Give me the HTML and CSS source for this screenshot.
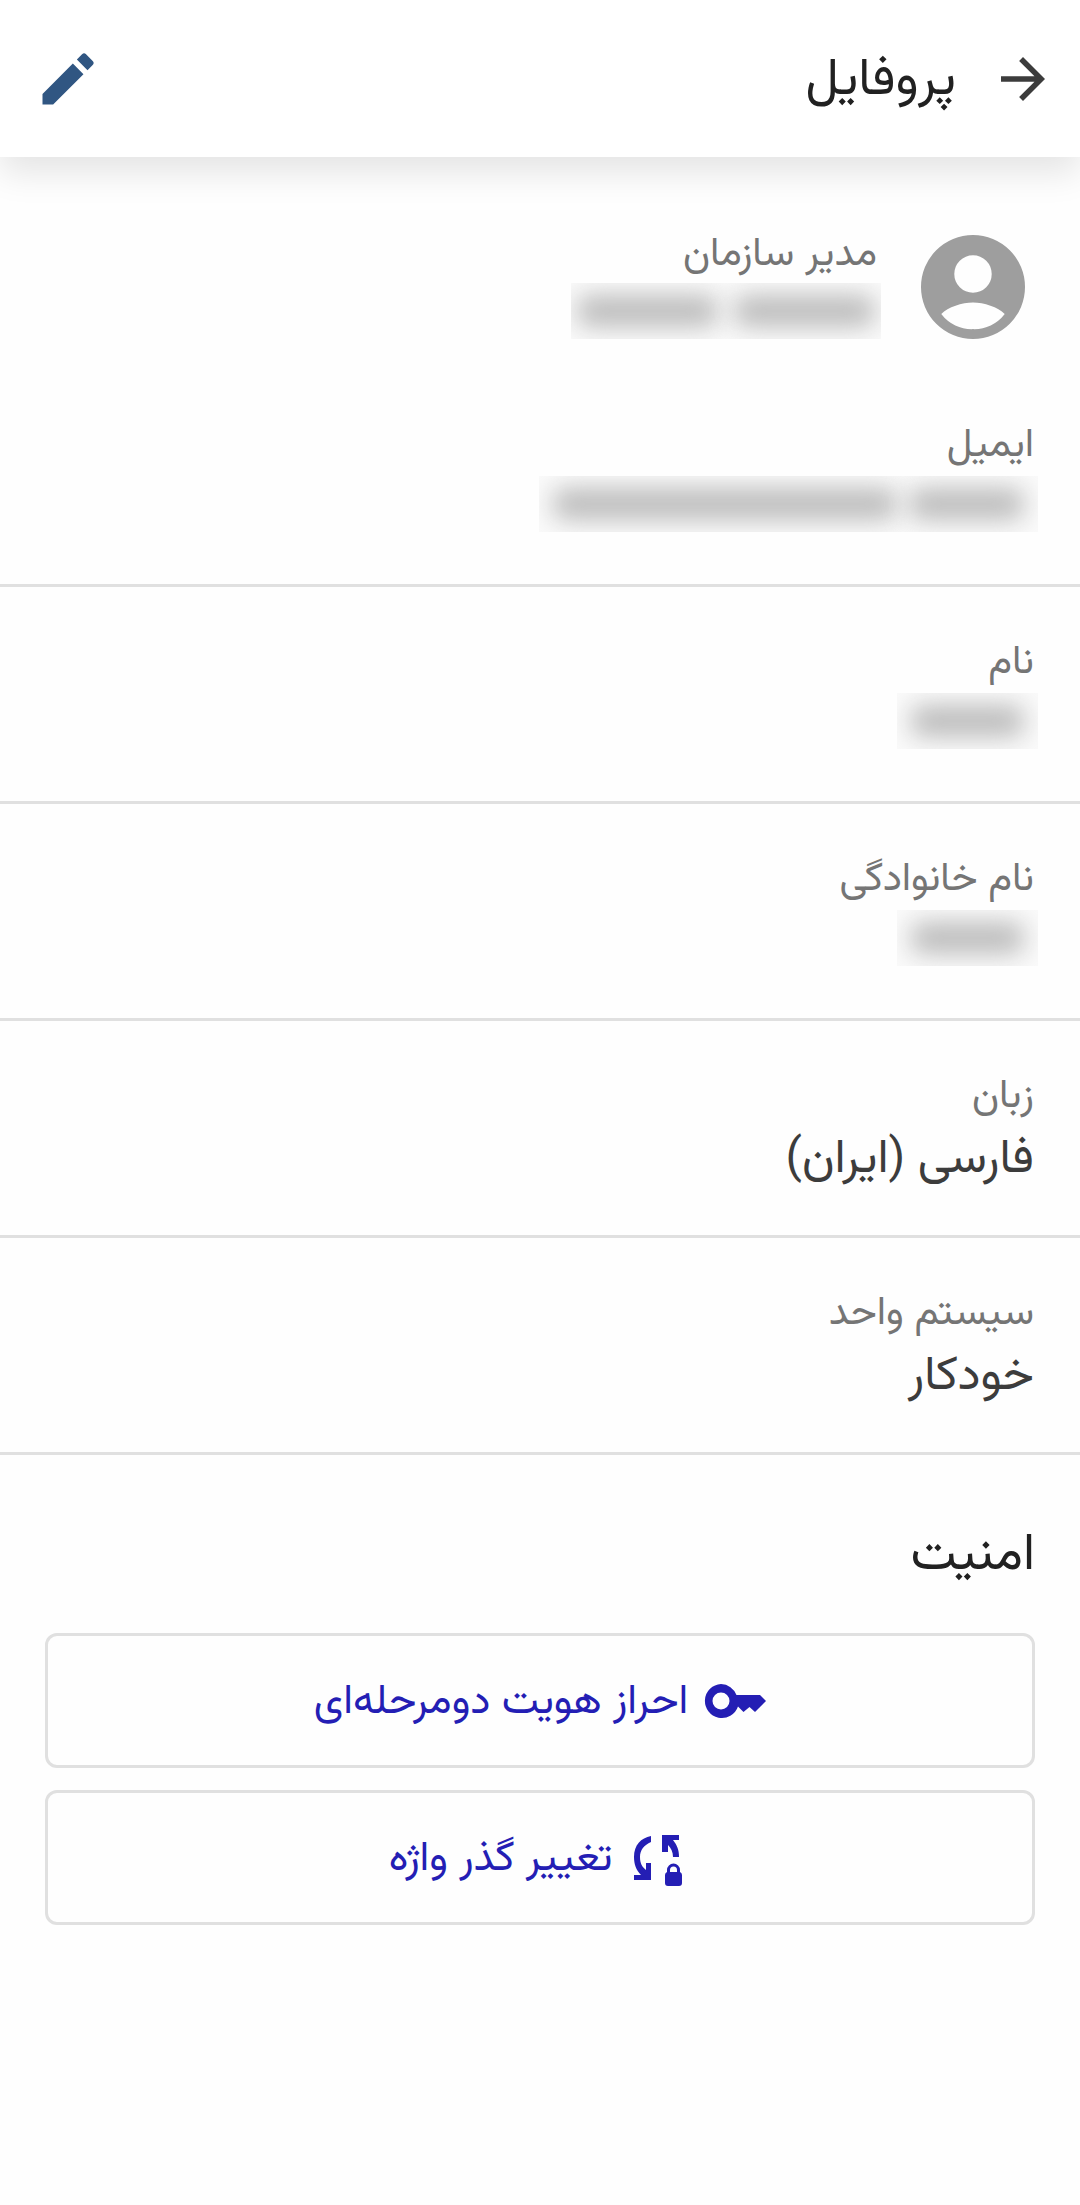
FILE: index.html
```html
<!DOCTYPE html>
<html lang="fa" dir="rtl">
<head>
<meta charset="utf-8">
<meta name="viewport" content="width=device-width, initial-scale=1">
<title>پروفایل</title>
<link rel="stylesheet" href="styles.css">
</head>
<body>
<header class="app-bar">
  <button class="icon-button" type="button" aria-label="بازگشت">
    <svg class="icon-back" viewBox="0 0 24 24"><path d="M12 4l-1.41 1.41L16.17 11H4v2h12.17l-5.58 5.59L12 20l8-8z"/></svg>
  </button>
  <h1 class="title">پروفایل</h1>
  <button class="icon-button edit" type="button" aria-label="ویرایش">
    <svg class="icon-edit" viewBox="0 0 24 24"><path d="M3 17.25V21h3.75L17.460 10.290l-3.75-3.75L3 17.25zM20.71 7.04a1 1 0 0 0 0-1.41l-2.34-2.34a1 1 0 0 0-1.41 0l-1.830 1.830 3.75 3.75 1.830-1.830z"/></svg>
  </button>
</header>
<main>
  <section class="summary">
    <svg class="avatar" viewBox="2 2 20 20"><path fill-rule="evenodd" d="M12 2a10 10 0 1 0 0 20 10 10 0 0 0 0-20zm0 3.9a3.6 3.6 0 1 1 0 7.2 3.6 3.6 0 0 1 0-7.2zM5.9 17.2c1.3-1.3 4-2.2 6.1-2.2s4.800.9 6.100 2.2A7.300 7.300 0 0 1 12 20.100a7.300 7.300 0 0 1-6.100-2.900z"/></svg>
    <div class="summary-text">
      <span class="label">مدیر سازمان</span>
      <span class="redacted full-name"><i class="given"></i><i class="family"></i></span>
    </div>
  </section>
  <dl class="fields">
    <div class="field"><dt class="label">ایمیل</dt><dd class="value"><span class="redacted email"><i class="user"></i><i class="domain"></i></span></dd></div>
    <div class="field"><dt class="label">نام</dt><dd class="value"><span class="redacted name"><i></i></span></dd></div>
    <div class="field"><dt class="label">نام خانوادگی</dt><dd class="value"><span class="redacted name"><i></i></span></dd></div>
    <div class="field"><dt class="label">زبان</dt><dd class="value">فارسی (ایران)</dd></div>
    <div class="field"><dt class="label">سیستم واحد</dt><dd class="value">خودکار</dd></div>
  </dl>
  <section class="security">
    <h2 class="title">امنیت</h2>
    <button class="action" type="button">
      <svg class="icon-key" viewBox="0 0 62 34"><path fill-rule="evenodd" d="M17 0a17 17 0 0 1 15.500 11H56l6 6-11 11-5.500-5-6 5-5.500-5.500A17 17 0 1 1 17 0zm0 8.500a8.500 8.500 0 1 0 0 17 8.500 8.500 0 0 0 0-17z"/></svg>
      <span>احراز هویت دومرحله‌ای</span>
    </button>
    <button class="action change-password" type="button">
      <svg class="icon-password" viewBox="0 0 49 51"><path d="M17 1v6C10 10 6 15 6 22c0 6 2 10 6 13V28h5v17H0v-5h7C2 35 0 29 0 22 0 10 7 3 17 1zM28 0h17v5h-6c4 5 6 10 6 17h-6c0-5-2-9-5-12v7h-6z"/><path fill-rule="evenodd" d="M33 37v-2a6.500 6.500 0 0 1 13 0v2q2 1 2 3v8q0 3-3 3H34q-3 0-3-3v-8q0-2 2-3zm3 0h7v-2a3.500 3.500 0 0 0-7 0z"/></svg>
      <span>تغییر گذر واژه</span>
    </button>
  </section>
</main>
</body>
</html>
```
FILE: styles.css
```css
* { box-sizing: border-box; }

body {
  margin: 0;
  background: #fefefe;
  color: #212121;
  font-family: Vazirmatn, "Noto Sans Arabic", "DejaVu Sans", sans-serif;
}

svg { display: block; flex: none; fill: currentColor; }

button {
  font: inherit;
  color: inherit;
  background: none;
  cursor: pointer;
}

.app-bar {
  display: flex;
  align-items: center;
  height: 157px;
  padding: 0 24px;
  background: #fff;
  box-shadow: 0 16px 32px rgba(0, 0, 0, 0.1);
}

.icon-button { border: 0; padding: 0; color: #3c3c3c; }
.icon-back { width: 66px; height: 66px; }
.edit { margin-inline-start: auto; color: #305682; padding-inline-end: 10px; }
.icon-edit { width: 68px; height: 68px; }

.title {
  margin: 0;
  font-size: 52px;
  line-height: 72px;
  font-weight: 400;
}

.app-bar .title { margin-inline-start: 34px; padding-top: 6px; }

.label {
  display: block;
  font-size: 40px;
  line-height: 56px;
  color: #757575;
}

.value {
  margin: 0;
  font-size: 48px;
  line-height: 72px;
  color: #3c3c3c;
}

.summary {
  display: flex;
  align-items: flex-start;
  gap: 44px;
  padding: 70px 55px 31px;
}

.avatar { width: 104px; height: 104px; margin-top: 8px; color: #9e9e9e; }

.redacted {
  display: flex;
  justify-content: space-between;
  align-items: center;
  direction: ltr;
  overflow: hidden;
  height: 56px;
  padding: 0 14px;
  background: #fafafa;
}

.redacted i {
  flex: 1;
  height: 32px;
  border-radius: 12px;
  background: #bdbdbd;
  filter: blur(12px);
}

.full-name { width: 310px; gap: 16px; padding: 0 6px; margin-inline-end: -4px; }
.email { width: 499px; gap: 12px; }
.email .user { flex: 3; }
.name { width: 141px; }

.fields { margin: 0; }

.field {
  height: 217px;
  padding: 48px 46px 0;
  border-bottom: 3px solid #e0e0e0;
}

.field .redacted { margin-inline-end: -4px; margin-top: 2px; }

.security {
  display: flex;
  flex-direction: column;
  gap: 22px;
  padding: 66px 45px;
}

.security .title { margin-bottom: 18px; }

.action {
  display: flex;
  align-items: center;
  justify-content: center;
  gap: 16px;
  height: 135px;
  border: 3px solid #e0e0e0;
  border-radius: 12px;
  color: #241eb4;
  font-size: 42px;
}

.action span { padding-top: 4px; }

.change-password { gap: 22px; padding-inline-start: 14px; }
.icon-key { width: 62px; height: 34px; }
.icon-password { width: 49px; height: 51px; margin-top: 6px; }
```
